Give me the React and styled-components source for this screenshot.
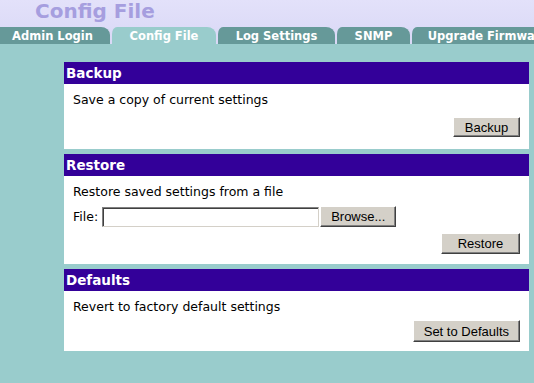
import React from 'react'
import styled, { createGlobalStyle } from 'styled-components'

const GlobalStyle = createGlobalStyle`
  html, body { margin:0; padding:0; background:#99cccc; }
  body { font-family:"DejaVu Sans", Verdana, sans-serif; }
`

const Page = styled.div`
  width:534px;
  height:383px;
  background:#99cccc;
  overflow:hidden;
`

const Top = styled.header`
  height:44px;
  display:flex;
  flex-direction:column;
  background:linear-gradient(#e3e1fa, #d9d8f6);
`

const Title = styled.h1`
  margin:0;
  height:27px;
  padding-left:35px;
  font:bold 20px/22px "DejaVu Sans", Verdana, sans-serif;
  color:#a69edf;
`

const Tabs = styled.nav`
  display:flex;
  gap:2px;
  margin-left:-5px;
  height:17px;
  white-space:nowrap;
`

const Tab = styled.div`
  flex:none;
  width:${p => p.$w}px;
  background:${p => (p.$active ? '#99cccc' : '#669999')};
  color:#fff;
  font:bold 11.5px/18px "DejaVu Sans", Verdana, sans-serif;
  text-align:center;
  border-radius:5px 9px 0 0 / 7px 8px 0 0;
`

const Content = styled.main`
  display:flex;
  flex-direction:column;
  gap:5px;
  padding:18px 5px 0 64px;
`

const Panel = styled.section`
  background:#fff;
`

const PanelHead = styled.h2`
  margin:0;
  height:22px;
  padding-left:2px;
  background:#330099;
  color:#fff;
  font:bold 13.5px/22px "DejaVu Sans", Verdana, sans-serif;
`

const PanelBody = styled.div`
  padding:9px 9px ${p => p.$pb}px;
  font:12.5px/14px "DejaVu Sans", Verdana, sans-serif;
  color:#000;
`

const ButtonRow = styled.div`
  display:flex;
  justify-content:flex-end;
  margin-top:${p => p.$mt}px;
`

const FileRow = styled.div`
  display:flex;
  align-items:center;
  margin-top:7px;
  label{ margin-right:4px; }
`

const Button = styled.button`
  box-sizing:border-box;
  height:${p => p.$h || 21}px;
  min-width:${p => p.$min || 0}px;
  padding:0 10px;
  margin-left:${p => p.$ml || 0}px;
  background:#d4d0c8;
  color:#000;
  font:13px "Liberation Sans", Arial, sans-serif;
  border:1px solid;
  border-color:#ffffff #404040 #404040 #ffffff;
  box-shadow:inset -1px -1px #808080;
`

const FileInput = styled.input`
  box-sizing:border-box;
  width:217px;
  height:20px;
  margin:0;
  background:#fff;
  border:1px solid;
  border-color:#808080 #d4d0c8 #d4d0c8 #808080;
  box-shadow:inset 1px 1px #404040;
`

const tabs = [
  ['Admin Login', 115],
  ['Config File', 104, true],
  ['Log Settings', 117],
  ['SNMP', 73],
  ['Upgrade Firmware', 152],
]

export default function App() {
  return (
    <Page>
      <GlobalStyle />
      <Top>
        <Title>Config File</Title>
        <Tabs>
          {tabs.map(([label, w, active]) => (
            <Tab key={label} $w={w} $active={active}>{label}</Tab>
          ))}
        </Tabs>
      </Top>
      <Content>
        <Panel>
          <PanelHead>Backup</PanelHead>
          <PanelBody $pb={12}>
            <div>Save a copy of current settings</div>
            <ButtonRow $mt={10}>
              <Button $h={20} $min={67}>Backup</Button>
            </ButtonRow>
          </PanelBody>
        </Panel>
        <Panel>
          <PanelHead>Restore</PanelHead>
          <PanelBody $pb={10}>
            <div>Restore saved settings from a file</div>
            <FileRow>
              <label>File:</label>
              <FileInput type="text" />
              <Button $ml={1} $min={76}>Browse...</Button>
            </FileRow>
            <ButtonRow $mt={6}>
              <Button $min={79}>Restore</Button>
            </ButtonRow>
          </PanelBody>
        </Panel>
        <Panel>
          <PanelHead>Defaults</PanelHead>
          <PanelBody $pb={9}>
            <div>Revert to factory default settings</div>
            <ButtonRow $mt={6}>
              <Button $h={22}>Set to Defaults</Button>
            </ButtonRow>
          </PanelBody>
        </Panel>
      </Content>
    </Page>
  )
}
